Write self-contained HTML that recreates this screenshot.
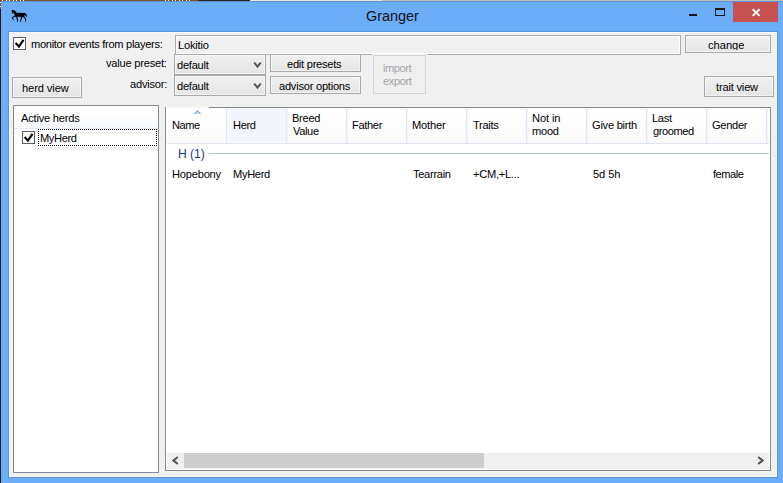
<!DOCTYPE html>
<html><head><meta charset="utf-8">
<style>
html,body{margin:0;padding:0;}
body{width:783px;height:483px;overflow:hidden;background:#6badf6;position:relative;font-family:"Liberation Sans",sans-serif;font-size:12px;color:#000;}
.abs{position:absolute;}
.t{position:absolute;white-space:nowrap;transform-origin:0 0;}
.btn{position:absolute;box-sizing:border-box;border:1px solid #a9a9a9;background:linear-gradient(#f0f0f0,#e5e5e5);box-shadow:inset 0 0 0 1px rgba(255,255,255,.55);}
.combo{position:absolute;box-sizing:border-box;border:1px solid #a9a9a9;background:linear-gradient(#f0f0f0,#e5e5e5);box-shadow:inset 0 0 0 1px rgba(255,255,255,.55);}
.cb{position:absolute;box-sizing:border-box;width:13px;height:13px;border:1px solid #5e5e5e;background:#fff;}
.sep{position:absolute;top:109px;width:1px;height:34px;background:#e1e9f6;}
.sep2{position:absolute;top:109px;width:1px;height:34px;background:#f1f5fb;}
</style></head><body>
<div class="abs" style="left:0;top:0;width:27px;height:1px;background:repeating-linear-gradient(90deg,#8a5a28 0,#8a5a28 2.5px,#fff 2.5px,#fff 3.5px)"></div><div class="abs" style="left:27px;top:0;width:171px;height:1px;background:#7b5231"></div><div class="abs" style="left:162px;top:0;width:28px;height:1px;background:repeating-linear-gradient(90deg,#7b5231 0,#7b5231 2.5px,#eee 2.5px,#eee 3.5px)"></div><div class="abs" style="left:198px;top:0;width:52px;height:1px;background:#26221f"></div><div class="abs" style="left:250px;top:0;width:132px;height:1px;background:#e6e4e0"></div><div class="abs" style="left:382px;top:0;width:401px;height:1px;background:#c3c0bc"></div><div class="abs" style="left:1px;top:1px;width:782px;height:1px;background:#5a93d6"></div><div class="abs" style="left:0;top:0;width:1px;height:60px;background:repeating-linear-gradient(180deg,#7b5231 0,#7b5231 2.5px,#fff 2.5px,#fff 3.5px)"></div><div class="abs" style="left:0;top:9px;width:1px;height:474px;background:#1c1a18"></div>
<!-- title bar -->
<svg class="abs" style="left:8px;top:6px" width="24" height="20" viewBox="0 0 580 483"><path d="M80 98 L130 98 C170 110 200 150 230 172 L330 165 L400 172 C440 185 460 215 458 260 L435 262 C432 235 420 215 405 205 L395 262 L432 300 L440 375 L418 380 L412 315 L365 268 L345 270 L305 378 L285 372 L318 280 L300 262 L225 262 L245 378 L222 382 L200 275 L175 255 L120 285 L140 335 L125 350 L98 290 L100 270 L160 235 L150 190 L120 150 L108 190 L92 185 L95 130 Z" fill="#000"/></svg>
<div class="abs" style="left:689px;top:14px;width:8px;height:2px;background:#1a1a1a"></div>
<div class="abs" style="left:715px;top:8px;width:10px;height:8px;box-sizing:border-box;border:1px solid #1a1a1a;border-top-width:2px"></div>
<div class="abs" style="left:733px;top:2px;width:45px;height:20px;background:#c75050"></div>
<svg class="abs" style="left:751px;top:8px" width="10" height="9" viewBox="0 0 10 9"><path d="M1.7 1.2 L8.6 7.9 M8.6 1.2 L1.7 7.9" stroke="#fff" stroke-width="1.9" fill="none"/></svg>
<!-- client -->
<div class="abs" style="left:8px;top:31px;width:770px;height:447px;background:#5a94da"></div><div class="abs" style="left:9px;top:32px;width:768px;height:445px;background:#f0f0f0;box-sizing:border-box;border:1px solid #f8f7f5"></div>

<!-- row 1 -->
<div class="cb" style="left:13px;top:37px"></div>
<svg class="abs" style="left:13px;top:37px" width="13" height="13" viewBox="0 0 13 13"><path d="M2.6 6.1 L5.9 9.5 L10.5 2.9" stroke="#000" stroke-width="2.15" fill="none"/></svg>
<div class="abs" style="left:175px;top:35px;width:506px;height:20px;box-sizing:border-box;border:1px solid #a8abb0;background:#f0f0f0;box-shadow:inset 0 0 0 1px #fff"></div>
<div class="btn" style="left:685px;top:35px;width:86px;height:18px"></div>
<!-- row 2,3 -->
<div class="combo" style="left:174px;top:54px;width:92px;height:21px"></div>
<svg class="abs" style="left:253px;top:61px" width="9" height="8" viewBox="0 0 9 8"><path d="M1.2 1.5 L4.5 5.7 L7.8 1.5" stroke="#555" stroke-width="2" fill="none"/></svg>
<div class="btn" style="left:270px;top:54px;width:91px;height:18px"></div>
<div class="combo" style="left:174px;top:75px;width:92px;height:21px"></div>
<svg class="abs" style="left:253px;top:82px" width="9" height="8" viewBox="0 0 9 8"><path d="M1.2 1.5 L4.5 5.7 L7.8 1.5" stroke="#555" stroke-width="2" fill="none"/></svg>
<div class="btn" style="left:270px;top:76px;width:91px;height:18px"></div>
<div class="abs" style="left:372px;top:54px;width:55px;height:41px;background:#f0f0f0"></div><div class="btn" style="left:373px;top:55px;width:53px;height:39px;border-color:#d4d4d4;background:#efefef;box-shadow:none"></div>
<div class="btn" style="left:12px;top:77px;width:70px;height:21px"></div>
<div class="btn" style="left:704px;top:76px;width:70px;height:21px"></div>

<!-- left panel -->
<div class="abs" style="left:13px;top:105px;width:146px;height:368px;box-sizing:border-box;border:1px solid #828790;background:#fff"></div>
<div class="abs" style="left:14px;top:106px;width:144px;height:22px;background:linear-gradient(#fff 40%,#f6f8fc)"></div>
<div class="abs" style="left:14px;top:128px;width:144px;height:1px;background:#e3e9f3"></div>
<div class="cb" style="left:22px;top:131px"></div>
<svg class="abs" style="left:22px;top:131px" width="13" height="13" viewBox="0 0 13 13"><path d="M2.6 6.1 L5.9 9.5 L10.5 2.9" stroke="#000" stroke-width="2.15" fill="none"/></svg>
<div class="abs" style="left:38px;top:129px;width:119px;height:17px;box-sizing:border-box;border:1px dotted #000"></div>

<!-- list -->
<div class="abs" style="left:165px;top:107px;width:606px;height:364px;box-sizing:border-box;border:1px solid #828790;background:#fff"></div>
<div class="abs" style="left:167px;top:109px;width:602px;height:34px;background:linear-gradient(#fff,#fbfbfc)"></div>
<div class="abs" style="left:229px;top:109px;width:57px;height:33px;background:#f2f6fc"></div>
<div class="abs" style="left:167px;top:143px;width:602px;height:1px;background:#dfe6f1"></div>
<div class="sep" style="left:226px"></div><div class="sep2" style="left:227px"></div><div class="sep" style="left:286px"></div><div class="sep2" style="left:287px"></div><div class="sep" style="left:346px"></div><div class="sep2" style="left:347px"></div><div class="sep" style="left:406px"></div><div class="sep2" style="left:407px"></div><div class="sep" style="left:466px"></div><div class="sep2" style="left:467px"></div><div class="sep" style="left:526px"></div><div class="sep2" style="left:527px"></div><div class="sep" style="left:586px"></div><div class="sep2" style="left:587px"></div><div class="sep" style="left:646px"></div><div class="sep2" style="left:647px"></div><div class="sep" style="left:706px"></div><div class="sep2" style="left:707px"></div><div class="sep" style="left:766px"></div><div class="sep2" style="left:767px"></div>
<svg class="abs" style="left:194px;top:110px" width="7" height="4" viewBox="0 0 7 4"><path d="M0 4 L3.5 0.3 L7 4 Z" fill="#b9d2ea"/><path d="M0.3 3.8 L3.5 0.6 L6.7 3.8" stroke="#5f93c8" stroke-width="0.9" fill="none"/></svg>
<div class="abs" style="left:209px;top:153px;width:560px;height:1px;background:#b8c6e4"></div>

<div class="abs" style="left:166px;top:107px;width:43px;height:1px;background:#f6f6f6"></div>
<!-- scrollbar -->
<div class="abs" style="left:167px;top:453px;width:602px;height:16px;background:#f0f0f0"></div>
<div class="abs" style="left:184px;top:453px;width:300px;height:15px;background:#cdcdcd"></div>
<svg class="abs" style="left:171px;top:456px" width="9" height="9" viewBox="0 0 9 9"><path d="M6.8 1 L2.4 4.5 L6.8 8" stroke="#505050" stroke-width="2" fill="none"/></svg>
<svg class="abs" style="left:756px;top:456px" width="9" height="9" viewBox="0 0 9 9"><path d="M2.2 1 L6.6 4.5 L2.2 8" stroke="#505050" stroke-width="2" fill="none"/></svg>

<!-- text -->
<div class="t" style="left:30.76px;top:37px;font-size:11.5px;line-height:14px;color:#000;letter-spacing:-0.318px;transform:scaleX(0.9652);">monitor events from players:</div>
<div class="t" style="left:177.57px;top:38px;font-size:11.5px;line-height:14px;color:#000;letter-spacing:-0.209px;transform:scaleX(0.9652);">Lokitio</div>
<div class="t" style="left:708.04px;top:38px;font-size:11.5px;line-height:14px;color:#000;letter-spacing:0.000px;transform:scaleX(0.9672);clip-path:inset(0 0 2px 0);">change</div>
<div class="t" style="left:105.91px;top:56px;font-size:11.5px;line-height:14px;color:#000;letter-spacing:-0.228px;transform:scaleX(0.9652);">value preset:</div>
<div class="t" style="left:177.24px;top:58px;font-size:11.5px;line-height:14px;color:#000;letter-spacing:-0.267px;transform:scaleX(0.9652);">default</div>
<div class="t" style="left:287.24px;top:57px;font-size:11.5px;line-height:14px;color:#000;letter-spacing:-0.256px;transform:scaleX(0.9652);">edit presets</div>
<div class="t" style="left:129.54px;top:77px;font-size:11.5px;line-height:14px;color:#000;letter-spacing:-0.232px;transform:scaleX(0.9652);">advisor:</div>
<div class="t" style="left:177.24px;top:79px;font-size:11.5px;line-height:14px;color:#000;letter-spacing:-0.267px;transform:scaleX(0.9652);">default</div>
<div class="t" style="left:278.54px;top:79px;font-size:11.5px;line-height:14px;color:#000;letter-spacing:-0.245px;transform:scaleX(0.9652);">advisor options</div>
<div class="t" style="left:382.56px;top:61px;font-size:11.5px;line-height:14px;color:#a4a4a8;letter-spacing:-0.470px;transform:scaleX(0.9652);">import</div>
<div class="t" style="left:383.24px;top:74px;font-size:11.5px;line-height:14px;color:#a4a4a8;letter-spacing:-0.423px;transform:scaleX(0.9652);">export</div>
<div class="t" style="left:21.66px;top:81px;font-size:11.5px;line-height:14px;color:#000;letter-spacing:-0.091px;transform:scaleX(0.9652);">herd view</div>
<div class="t" style="left:716.02px;top:80px;font-size:11.5px;line-height:14px;color:#000;letter-spacing:-0.191px;transform:scaleX(0.9652);">trait view</div>
<div class="t" style="left:21.21px;top:111px;font-size:11.5px;line-height:14px;color:#000;letter-spacing:-0.225px;transform:scaleX(0.9652);">Active herds</div>
<div class="t" style="left:39.78px;top:131px;font-size:11.5px;line-height:14px;color:#000;letter-spacing:-0.391px;transform:scaleX(0.9652);">MyHerd</div>
<div class="t" style="left:172.47px;top:118px;font-size:11.5px;line-height:14px;color:#000;letter-spacing:-0.488px;transform:scaleX(0.9652);">Name</div>
<div class="t" style="left:232.77px;top:118px;font-size:11.5px;line-height:14px;color:#000;letter-spacing:-0.375px;transform:scaleX(0.9652);">Herd</div>
<div class="t" style="left:292.27px;top:111px;font-size:11.5px;line-height:14px;color:#000;letter-spacing:-0.294px;transform:scaleX(0.9652);">Breed</div>
<div class="t" style="left:293.11px;top:124px;font-size:11.5px;line-height:14px;color:#000;letter-spacing:-0.391px;transform:scaleX(0.9652);">Value</div>
<div class="t" style="left:352.27px;top:118px;font-size:11.5px;line-height:14px;color:#000;letter-spacing:-0.350px;transform:scaleX(0.9652);">Father</div>
<div class="t" style="left:412.27px;top:118px;font-size:11.5px;line-height:14px;color:#000;letter-spacing:-0.185px;transform:scaleX(0.9652);">Mother</div>
<div class="t" style="left:472.92px;top:118px;font-size:11.5px;line-height:14px;color:#000;letter-spacing:-0.340px;transform:scaleX(0.9652);">Traits</div>
<div class="t" style="left:532.28px;top:111px;font-size:11.5px;line-height:14px;color:#000;letter-spacing:-0.120px;transform:scaleX(0.9652);">Not in</div>
<div class="t" style="left:531.96px;top:124px;font-size:11.5px;line-height:14px;color:#000;letter-spacing:-0.266px;transform:scaleX(0.9652);">mood</div>
<div class="t" style="left:592.45px;top:118px;font-size:11.5px;line-height:14px;color:#000;letter-spacing:-0.259px;transform:scaleX(0.9652);">Give birth</div>
<div class="t" style="left:652.08px;top:111px;font-size:11.5px;line-height:14px;color:#000;letter-spacing:-0.338px;transform:scaleX(0.9652);">Last</div>
<div class="t" style="left:652.54px;top:124px;font-size:11.5px;line-height:14px;color:#000;letter-spacing:-0.456px;transform:scaleX(0.9652);">groomed</div>
<div class="t" style="left:712.15px;top:118px;font-size:11.5px;line-height:14px;color:#000;letter-spacing:-0.303px;transform:scaleX(0.9652);">Gender</div>
<div class="t" style="left:178.30px;top:147px;font-size:12px;line-height:14px;color:#1e3294;letter-spacing:0.000px;transform:scaleX(1.0040);">H (1)</div>
<div class="t" style="left:172.38px;top:167px;font-size:11.5px;line-height:14px;color:#000;letter-spacing:-0.218px;transform:scaleX(0.9652);">Hopebony</div>
<div class="t" style="left:232.77px;top:167px;font-size:11.5px;line-height:14px;color:#000;letter-spacing:-0.328px;transform:scaleX(0.9652);">MyHerd</div>
<div class="t" style="left:413.42px;top:167px;font-size:11.5px;line-height:14px;color:#000;letter-spacing:-0.315px;transform:scaleX(0.9652);">Tearrain</div>
<div class="t" style="left:472.64px;top:167px;font-size:11.5px;line-height:14px;color:#000;letter-spacing:-0.282px;transform:scaleX(0.9652);">+CM,+L...</div>
<div class="t" style="left:592.54px;top:167px;font-size:11.5px;line-height:14px;color:#000;letter-spacing:-0.090px;transform:scaleX(0.9652);">5d 5h</div>
<div class="t" style="left:712.52px;top:167px;font-size:11.5px;line-height:14px;color:#000;letter-spacing:-0.487px;transform:scaleX(0.9652);">female</div>
<div class="t" style="left:365.88px;top:8px;font-size:14px;line-height:16px;color:#101018;letter-spacing:0.000px;transform:scaleX(1.0298);">Granger</div>
</body></html>
